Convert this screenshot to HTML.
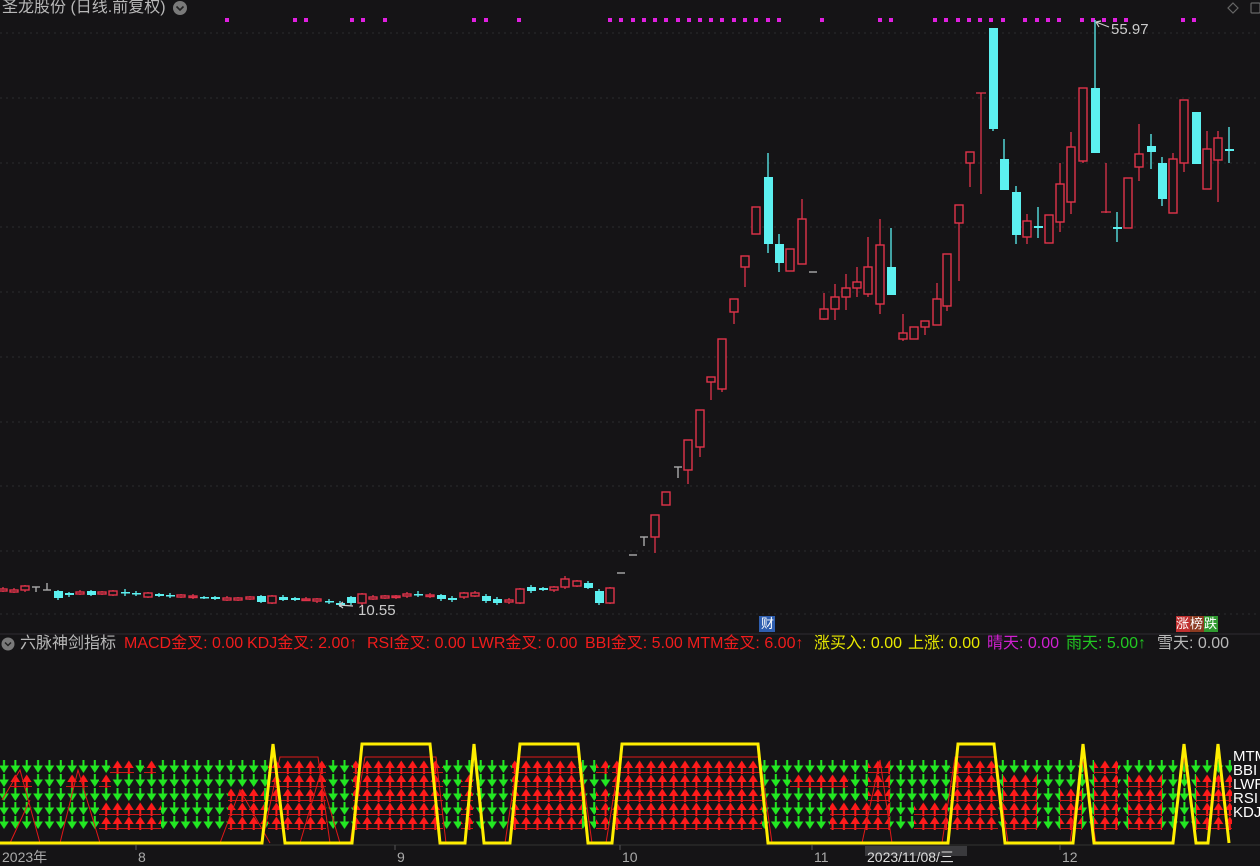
<!DOCTYPE html>
<html><head><meta charset="utf-8">
<style>
html,body{margin:0;padding:0;background:#151416;width:1260px;height:856px;overflow:hidden;font-family:"Liberation Sans","Noto Sans CJK SC",sans-serif}
.t{position:absolute;font-size:16px;white-space:nowrap;line-height:18px}
.rd{color:#f01c1c}
svg{position:absolute;left:0;top:0}
.r{fill:#151416;stroke:#e0334a;stroke-width:1.4}
.c{fill:#5cf0f0}
.rw{stroke:#e0334a;stroke-width:1.3}
.cw{stroke:#5cf0f0;stroke-width:1.3}
.gw{stroke:#aaa;stroke-width:1.4}
</style></head><body>
<svg width="1260" height="856" viewBox="0 0 1260 856">
<defs>
<pattern id="gp" patternUnits="userSpaceOnUse" x="-1.675" y="760" width="11.35" height="14">
<rect x="4.7" y="0" width="2" height="8" fill="#22e822"/>
<polygon points="0.8,5.5 10.55,5.5 5.675,13" fill="#22e822"/>
</pattern>
<pattern id="rp" patternUnits="userSpaceOnUse" x="-1.675" y="760" width="11.35" height="14">
<rect width="11.35" height="14" fill="#151416"/>
<polygon points="0.8,8 10.55,8 5.675,0.5" fill="#ff1a1a"/>
<rect x="4.7" y="6" width="2" height="8" fill="#ff1a1a"/>
<rect x="0" y="12" width="11.35" height="0.9" fill="#e01818"/>
</pattern>
</defs>
<g stroke="#2c2b2e" stroke-width="1" stroke-dasharray="2,4">
<line x1="0" y1="33" x2="1260" y2="33"/><line x1="0" y1="98" x2="1260" y2="98"/><line x1="0" y1="163" x2="1260" y2="163"/><line x1="0" y1="227" x2="1260" y2="227"/><line x1="0" y1="292" x2="1260" y2="292"/><line x1="0" y1="357" x2="1260" y2="357"/><line x1="0" y1="422" x2="1260" y2="422"/><line x1="0" y1="486" x2="1260" y2="486"/><line x1="0" y1="551" x2="1260" y2="551"/><line x1="0" y1="614" x2="1260" y2="614"/>
</g>
<line x1="0" y1="634" x2="1260" y2="634" stroke="#2e2d31"/>
<g fill="#e020e0">
<rect x="225" y="18" width="4" height="4"/><rect x="293" y="18" width="4" height="4"/><rect x="304" y="18" width="4" height="4"/><rect x="350" y="18" width="4" height="4"/><rect x="361" y="18" width="4" height="4"/><rect x="383" y="18" width="4" height="4"/><rect x="472" y="18" width="4" height="4"/><rect x="484" y="18" width="4" height="4"/><rect x="517" y="18" width="4" height="4"/>
<rect x="608" y="18" width="4" height="4"/><rect x="619" y="18" width="4" height="4"/><rect x="631" y="18" width="4" height="4"/><rect x="642" y="18" width="4" height="4"/><rect x="653" y="18" width="4" height="4"/><rect x="664" y="18" width="4" height="4"/><rect x="676" y="18" width="4" height="4"/><rect x="687" y="18" width="4" height="4"/><rect x="698" y="18" width="4" height="4"/><rect x="709" y="18" width="4" height="4"/><rect x="720" y="18" width="4" height="4"/><rect x="732" y="18" width="4" height="4"/><rect x="743" y="18" width="4" height="4"/><rect x="754" y="18" width="4" height="4"/><rect x="766" y="18" width="4" height="4"/><rect x="777" y="18" width="4" height="4"/>
<rect x="820" y="18" width="4" height="4"/><rect x="878" y="18" width="4" height="4"/><rect x="889" y="18" width="4" height="4"/>
<rect x="933" y="18" width="4" height="4"/><rect x="944" y="18" width="4" height="4"/><rect x="956" y="18" width="4" height="4"/><rect x="967" y="18" width="4" height="4"/><rect x="978" y="18" width="4" height="4"/><rect x="989" y="18" width="4" height="4"/><rect x="1001" y="18" width="4" height="4"/>
<rect x="1023" y="18" width="4" height="4"/><rect x="1035" y="18" width="4" height="4"/><rect x="1046" y="18" width="4" height="4"/><rect x="1057" y="18" width="4" height="4"/>
<rect x="1080" y="18" width="4" height="4"/><rect x="1091" y="18" width="4" height="4"/><rect x="1102" y="18" width="4" height="4"/><rect x="1113" y="18" width="4" height="4"/><rect x="1124" y="18" width="4" height="4"/>
<rect x="1181" y="18" width="4" height="4"/><rect x="1192" y="18" width="4" height="4"/>
</g>
<g>
<line class="rw" x1="3" y1="587" x2="3" y2="592"/><rect class="r" x="-1" y="589" width="8" height="2"/>
<line class="rw" x1="14" y1="588" x2="14" y2="593"/><rect class="r" x="10" y="590" width="8" height="2"/>
<line class="rw" x1="25" y1="585" x2="25" y2="592"/><rect class="r" x="21" y="586" width="8" height="4"/>
<line class="gw" x1="36" y1="587" x2="36" y2="592"/><line class="gw" x1="32" y1="587" x2="40" y2="587"/>
<line class="gw" x1="47" y1="583" x2="47" y2="590"/><line class="gw" x1="43" y1="590" x2="51" y2="590"/>
<line class="cw" x1="58" y1="590" x2="58" y2="600"/><rect class="c" x="54" y="591" width="9" height="7"/>
<line class="cw" x1="69" y1="592" x2="69" y2="597"/><rect class="c" x="65" y="593" width="9" height="2"/>
<line class="rw" x1="80" y1="590" x2="80" y2="595"/><rect class="r" x="76" y="592" width="8" height="2"/>
<line class="cw" x1="91" y1="590" x2="91" y2="596"/><rect class="c" x="87" y="591" width="9" height="4"/>
<line class="rw" x1="102" y1="591" x2="102" y2="595"/><rect class="r" x="98" y="592" width="8" height="2"/>
<line class="rw" x1="113" y1="590" x2="113" y2="596"/><rect class="r" x="109" y="591" width="8" height="4"/>
<line class="cw" x1="125" y1="589" x2="125" y2="596"/><rect class="c" x="121" y="592" width="9" height="1.5"/>
<line class="cw" x1="136" y1="591" x2="136" y2="596"/><rect class="c" x="132" y="593" width="9" height="1.5"/>
<line class="rw" x1="148" y1="592" x2="148" y2="598"/><rect class="r" x="144" y="593" width="8" height="4"/>
<line class="cw" x1="159" y1="593" x2="159" y2="597"/><rect class="c" x="155" y="594" width="9" height="2"/>
<line class="cw" x1="170" y1="593" x2="170" y2="598"/><rect class="c" x="166" y="595" width="9" height="1.5"/>
<line class="rw" x1="181" y1="594" x2="181" y2="598"/><rect class="r" x="177" y="595" width="8" height="2"/>
<line class="rw" x1="193" y1="594" x2="193" y2="599"/><rect class="r" x="189" y="596" width="8" height="1.5"/>
<line class="cw" x1="204" y1="596" x2="204" y2="599"/><rect class="c" x="200" y="597" width="9" height="1.5"/>
<line class="cw" x1="215" y1="596" x2="215" y2="600"/><rect class="c" x="211" y="597" width="9" height="2"/>
<line class="rw" x1="227" y1="596" x2="227" y2="601"/><rect class="r" x="223" y="598" width="8" height="2"/>
<line class="rw" x1="238" y1="597" x2="238" y2="601"/><rect class="r" x="234" y="598" width="8" height="2"/>
<line class="rw" x1="250" y1="596" x2="250" y2="600"/><rect class="r" x="246" y="597" width="8" height="2"/>
<line class="cw" x1="261" y1="595" x2="261" y2="603"/><rect class="c" x="257" y="596" width="9" height="6"/>
<line class="rw" x1="272" y1="595" x2="272" y2="604"/><rect class="r" x="268" y="596" width="8" height="7"/>
<line class="cw" x1="283" y1="595" x2="283" y2="601"/><rect class="c" x="279" y="597" width="9" height="3"/>
<line class="cw" x1="295" y1="597" x2="295" y2="601"/><rect class="c" x="291" y="598" width="9" height="2"/>
<line class="rw" x1="306" y1="597" x2="306" y2="601"/><rect class="r" x="302" y="599" width="8" height="1.5"/>
<line class="rw" x1="317" y1="598" x2="317" y2="603"/><rect class="r" x="313" y="599" width="8" height="2"/>
<line class="cw" x1="329" y1="599" x2="329" y2="604"/><rect class="c" x="325" y="601" width="9" height="1.5"/>
<line class="cw" x1="340" y1="601" x2="340" y2="607"/><rect class="c" x="336" y="603" width="9" height="2"/>
<line class="cw" x1="351" y1="596" x2="351" y2="605"/><rect class="c" x="347" y="597" width="9" height="6"/>
<line class="rw" x1="362" y1="593" x2="362" y2="606"/><rect class="r" x="358" y="594" width="8" height="9"/>
<line class="rw" x1="373" y1="595" x2="373" y2="600"/><rect class="r" x="369" y="597" width="8" height="2"/>
<line class="rw" x1="385" y1="595" x2="385" y2="599"/><rect class="r" x="381" y="596" width="8" height="2"/>
<line class="rw" x1="396" y1="595" x2="396" y2="599"/><rect class="r" x="392" y="596" width="8" height="1.5"/>
<line class="rw" x1="407" y1="592" x2="407" y2="598"/><rect class="r" x="403" y="594" width="8" height="2"/>
<line class="cw" x1="418" y1="591" x2="418" y2="597"/><rect class="c" x="414" y="594" width="9" height="1.5"/>
<line class="rw" x1="430" y1="593" x2="430" y2="598"/><rect class="r" x="426" y="595" width="8" height="1.5"/>
<line class="cw" x1="441" y1="594" x2="441" y2="601"/><rect class="c" x="437" y="595" width="9" height="4"/>
<line class="cw" x1="452" y1="596" x2="452" y2="602"/><rect class="c" x="448" y="598" width="9" height="2"/>
<line class="rw" x1="464" y1="592" x2="464" y2="599"/><rect class="r" x="460" y="593" width="8" height="4"/>
<line class="rw" x1="475" y1="591" x2="475" y2="597"/><rect class="r" x="471" y="593" width="8" height="3"/>
<line class="cw" x1="486" y1="594" x2="486" y2="603"/><rect class="c" x="482" y="596" width="9" height="5"/>
<line class="cw" x1="497" y1="597" x2="497" y2="605"/><rect class="c" x="493" y="599" width="9" height="4"/>
<line class="rw" x1="509" y1="598" x2="509" y2="604"/><rect class="r" x="505" y="600" width="8" height="2"/>
<line class="rw" x1="520" y1="588" x2="520" y2="604"/><rect class="r" x="516" y="589" width="8" height="14"/>
<line class="cw" x1="531" y1="585" x2="531" y2="593"/><rect class="c" x="527" y="587" width="9" height="4"/>
<line class="cw" x1="543" y1="587" x2="543" y2="591"/><rect class="c" x="539" y="588" width="9" height="2"/>
<line class="rw" x1="554" y1="586" x2="554" y2="592"/><rect class="r" x="550" y="587" width="8" height="3"/>
<line class="rw" x1="565" y1="576" x2="565" y2="589"/><rect class="r" x="561" y="579" width="8" height="8"/>
<line class="rw" x1="577" y1="580" x2="577" y2="587"/><rect class="r" x="573" y="581" width="8" height="5"/>
<line class="cw" x1="588" y1="581" x2="588" y2="589"/><rect class="c" x="584" y="583" width="9" height="5"/>
<line class="cw" x1="599" y1="589" x2="599" y2="605"/><rect class="c" x="595" y="591" width="9" height="12"/>
<line class="rw" x1="610" y1="587" x2="610" y2="604"/><rect class="r" x="606" y="588" width="8" height="15"/>
<line class="gw" x1="617" y1="573" x2="625" y2="573"/>
<line class="gw" x1="629" y1="555" x2="637" y2="555"/>
<line class="gw" x1="644" y1="537" x2="644" y2="546"/><line class="gw" x1="640" y1="537" x2="648" y2="537"/>
<line class="rw" x1="655" y1="515" x2="655" y2="553"/><rect class="r" x="651" y="515" width="8" height="22"/>
<rect class="r" x="662" y="492" width="8" height="13"/>
<line class="gw" x1="678" y1="467" x2="678" y2="478"/><line class="gw" x1="674" y1="467" x2="682" y2="467"/>
<line class="rw" x1="688" y1="440" x2="688" y2="484"/><rect class="r" x="684" y="440" width="8" height="30"/>
<line class="rw" x1="700" y1="410" x2="700" y2="457"/><rect class="r" x="696" y="410" width="8" height="37"/>
<line class="rw" x1="711" y1="377" x2="711" y2="400"/><rect class="r" x="707" y="377" width="8" height="5"/>
<line class="rw" x1="722" y1="339" x2="722" y2="392"/><rect class="r" x="718" y="339" width="8" height="50"/>
<line class="rw" x1="734" y1="299" x2="734" y2="324"/><rect class="r" x="730" y="299" width="8" height="13"/>
<line class="rw" x1="745" y1="256" x2="745" y2="287"/><rect class="r" x="741" y="256" width="8" height="11"/>
<rect class="r" x="752" y="207" width="8" height="27"/>
<line class="cw" x1="768" y1="153" x2="768" y2="253"/><rect class="c" x="764" y="177" width="9" height="67"/>
<line class="cw" x1="779" y1="234" x2="779" y2="272"/><rect class="c" x="775" y="244" width="9" height="19"/>
<rect class="r" x="786" y="249" width="8" height="22"/>
<line class="rw" x1="802" y1="199" x2="802" y2="264"/><rect class="r" x="798" y="219" width="8" height="45"/>
<line class="gw" x1="809" y1="272" x2="817" y2="272"/>
<line class="rw" x1="824" y1="293" x2="824" y2="320"/><rect class="r" x="820" y="309" width="8" height="10"/>
<line class="rw" x1="835" y1="284" x2="835" y2="320"/><rect class="r" x="831" y="297" width="8" height="12"/>
<line class="rw" x1="846" y1="274" x2="846" y2="310"/><rect class="r" x="842" y="288" width="8" height="9"/>
<line class="rw" x1="857" y1="267" x2="857" y2="297"/><rect class="r" x="853" y="282" width="8" height="6"/>
<line class="rw" x1="868" y1="237" x2="868" y2="297"/><rect class="r" x="864" y="267" width="8" height="27"/>
<line class="rw" x1="880" y1="219" x2="880" y2="314"/><rect class="r" x="876" y="245" width="8" height="59"/>
<line class="cw" x1="891" y1="228" x2="891" y2="295"/><rect class="c" x="887" y="267" width="9" height="28"/>
<line class="rw" x1="903" y1="314" x2="903" y2="341"/><rect class="r" x="899" y="333" width="8" height="6"/>
<rect class="r" x="910" y="327" width="8" height="12"/>
<line class="rw" x1="925" y1="321" x2="925" y2="335"/><rect class="r" x="921" y="321" width="8" height="6"/>
<line class="rw" x1="937" y1="283" x2="937" y2="325"/><rect class="r" x="933" y="299" width="8" height="26"/>
<line class="rw" x1="947" y1="254" x2="947" y2="311"/><rect class="r" x="943" y="254" width="8" height="52"/>
<line class="rw" x1="959" y1="205" x2="959" y2="281"/><rect class="r" x="955" y="205" width="8" height="18"/>
<line class="rw" x1="970" y1="152" x2="970" y2="187"/><rect class="r" x="966" y="152" width="8" height="11"/>
<line class="rw" x1="981" y1="93" x2="981" y2="194"/><line class="rw" x1="976" y1="93" x2="986" y2="93"/>
<line class="cw" x1="993" y1="28" x2="993" y2="131"/><rect class="c" x="989" y="28" width="9" height="101"/>
<line class="cw" x1="1004" y1="139" x2="1004" y2="190"/><rect class="c" x="1000" y="159" width="9" height="31"/>
<line class="cw" x1="1016" y1="186" x2="1016" y2="244"/><rect class="c" x="1012" y="192" width="9" height="43"/>
<line class="rw" x1="1027" y1="214" x2="1027" y2="244"/><rect class="r" x="1023" y="221" width="8" height="16"/>
<line class="cw" x1="1038" y1="207" x2="1038" y2="238"/><rect class="c" x="1034" y="226" width="9" height="2"/>
<rect class="r" x="1045" y="215" width="8" height="28"/>
<line class="rw" x1="1060" y1="163" x2="1060" y2="232"/><rect class="r" x="1056" y="184" width="8" height="38"/>
<line class="rw" x1="1071" y1="132" x2="1071" y2="214"/><rect class="r" x="1067" y="147" width="8" height="55"/>
<line class="rw" x1="1083" y1="88" x2="1083" y2="163"/><rect class="r" x="1079" y="88" width="8" height="73"/>
<line class="cw" x1="1095" y1="20" x2="1095" y2="153"/><rect class="c" x="1091" y="88" width="9" height="65"/>
<line class="rw" x1="1106" y1="163" x2="1106" y2="213"/><line class="rw" x1="1101" y1="212" x2="1111" y2="212"/>
<line class="cw" x1="1117" y1="212" x2="1117" y2="242"/><rect class="c" x="1113" y="227" width="9" height="2"/>
<rect class="r" x="1124" y="178" width="8" height="50"/>
<line class="rw" x1="1139" y1="124" x2="1139" y2="181"/><rect class="r" x="1135" y="154" width="8" height="13"/>
<line class="cw" x1="1151" y1="134" x2="1151" y2="169"/><rect class="c" x="1147" y="146" width="9" height="6"/>
<line class="cw" x1="1162" y1="157" x2="1162" y2="206"/><rect class="c" x="1158" y="163" width="9" height="36"/>
<line class="rw" x1="1173" y1="153" x2="1173" y2="213"/><rect class="r" x="1169" y="159" width="8" height="54"/>
<line class="rw" x1="1184" y1="100" x2="1184" y2="172"/><rect class="r" x="1180" y="100" width="8" height="63"/>
<rect class="c" x="1192" y="112" width="9" height="52"/>
<line class="rw" x1="1207" y1="131" x2="1207" y2="189"/><rect class="r" x="1203" y="149" width="8" height="40"/>
<line class="rw" x1="1218" y1="131" x2="1218" y2="202"/><rect class="r" x="1214" y="138" width="8" height="22"/>
<line class="cw" x1="1229" y1="127" x2="1229" y2="163"/><rect class="c" x="1225" y="149" width="9" height="2"/>
</g>
<g stroke="#ccc" stroke-width="1.2" fill="none">
<path d="M353 606 L339 605 M339 605 L343 602 M339 605 L343 608"/>
<path d="M1109 27 L1096 22 M1096 22 L1099 27 M1096 22 L1101 21"/>
</g>
<text x="358" y="615" fill="#ccc" font-size="15" font-family="Liberation Sans">10.55</text>
<text x="1111" y="34" fill="#ccc" font-size="15" font-family="Liberation Sans">55.97</text>
<path d="M1233 3 L1238 8 L1233 13 L1228 8 Z" fill="none" stroke="#666" stroke-width="1.2"/>
<rect x="1251" y="3" width="9" height="10" rx="1" fill="none" stroke="#666" stroke-width="1.2"/>
<circle cx="180" cy="8" r="7" fill="#7a7a7a"/><path d="M176.5 6.5 L180 10 L183.5 6.5" stroke="#222" stroke-width="1.6" fill="none"/>
<circle cx="8" cy="644" r="6.5" fill="#7a7a7a"/><path d="M5 642.5 L8 645.5 L11 642.5" stroke="#222" stroke-width="1.5" fill="none"/>
<rect x="759" y="616" width="16" height="16" fill="#2f5fb0"/>
<rect x="1176" y="616" width="14" height="16" fill="#c03030"/><rect x="1190" y="616" width="14" height="16" fill="#8a3a20"/><rect x="1204" y="616" width="14" height="16" fill="#2f9a30"/>
<rect x="0" y="760" width="1232" height="70" fill="url(#gp)"/>
<g fill="url(#rp)">
<rect x="268" y="760" width="58" height="70"/>
<rect x="353" y="760" width="90" height="70"/>
<rect x="512" y="760" width="70" height="70"/>
<rect x="612" y="760" width="150" height="70"/>
<rect x="950" y="760" width="48" height="70"/>
<rect x="99" y="802" width="62" height="28"/>
<rect x="10" y="774" width="22" height="14"/>
<rect x="66" y="774" width="22" height="14"/>
<rect x="99" y="774" width="12" height="14"/>
<rect x="144" y="760" width="12" height="14"/>
<rect x="110" y="760" width="24" height="14"/>
<rect x="228" y="788" width="36" height="42"/>
<rect x="461" y="774" width="12" height="56"/>
<rect x="596" y="788" width="12" height="42"/>
<rect x="596" y="760" width="12" height="14"/>
<rect x="868" y="760" width="22" height="70"/>
<rect x="790" y="774" width="58" height="14"/>
<rect x="830" y="802" width="40" height="28"/>
<rect x="1003" y="774" width="34" height="56"/>
<rect x="1060" y="788" width="22" height="42"/>
<rect x="1094" y="760" width="24" height="70"/>
<rect x="1128" y="774" width="34" height="56"/>
<rect x="1196" y="774" width="36" height="56"/>
<rect x="914" y="802" width="34" height="28"/>
</g>
<g stroke="#e01818" stroke-width="1" fill="none">
<path d="M262 843 L280 757 L318 757 L330 843"/>
<path d="M350 843 L365 757 L436 757 L446 843"/>
<path d="M505 843 L518 757 L580 757 L592 843"/>
<path d="M606 843 L620 757 L760 757 L772 843"/>
<path d="M942 843 L955 757 L995 757 L1008 843"/>
<path d="M1070 843 L1082 757 L1096 843"/>
<path d="M1172 843 L1184 757 L1196 843"/>
<path d="M862 843 L880 760 L892 843"/>
<path d="M2 800 L20 770 L40 843 M60 843 L78 770 L100 843 M10 843 L30 800"/>
<path d="M220 843 L240 790 L270 843 M300 843 L320 775 L340 843"/>
</g>
<polyline fill="none" stroke="#ffee00" stroke-width="3" stroke-linejoin="miter" points="0,843 262,843 273,744 285,843 352,843 362,744 430,744 440,843 465,843 474,744 484,843 510,843 520,744 578,744 588,843 612,843 622,744 758,744 768,843 948,843 958,744 994,744 1005,843 1073,843 1083,744 1094,843 1173,843 1184,744 1196,843 1208,843 1218,744 1229,843"/>
<line x1="0" y1="845" x2="1260" y2="845" stroke="#333"/>
<g stroke="#555"><line x1="136" y1="845" x2="136" y2="850"/><line x1="395" y1="845" x2="395" y2="850"/><line x1="620" y1="845" x2="620" y2="850"/><line x1="812" y1="845" x2="812" y2="850"/><line x1="1060" y1="845" x2="1060" y2="850"/></g>
<rect x="865" y="846" width="102" height="12" fill="#3a3a3d"/>
</svg>
<div class="t" style="left:2px;top:-1px;color:#b8b8b8">圣龙股份 (日线.前复权)</div>
<div class="t" style="left:761px;top:615px;color:#fff;font-size:13px">财</div>
<div class="t" style="left:1176px;top:615px;color:#fff;font-size:13px;letter-spacing:1px">涨榜跌</div>
<div class="t" style="left:20px;top:635px;color:#b8b8b8">六脉神剑指标</div>
<div class="t rd" style="left:124px;top:635px">MACD金叉: 0.00</div>
<div class="t rd" style="left:247px;top:635px">KDJ金叉: 2.00↑</div>
<div class="t rd" style="left:367px;top:635px">RSI金叉: 0.00</div>
<div class="t rd" style="left:471px;top:635px">LWR金叉: 0.00</div>
<div class="t rd" style="left:585px;top:635px">BBI金叉: 5.00</div>
<div class="t rd" style="left:687px;top:635px">MTM金叉: 6.00↑</div>
<div class="t" style="left:814px;top:635px;color:#e8e800">涨买入: 0.00</div>
<div class="t" style="left:908px;top:635px;color:#e8e800">上涨: 0.00</div>
<div class="t" style="left:987px;top:635px;color:#d020d0">晴天: 0.00</div>
<div class="t" style="left:1066px;top:635px;color:#22c822">雨天: 5.00↑</div>
<div class="t" style="left:1157px;top:635px;color:#b8b8b8">雪天: 0.00</div>
<div class="t" style="left:1233px;top:750px;color:#fff;font-size:15px;line-height:14px">MTM<br>BBI<br>LWR<br>RSI<br>KDJ</div>
<div class="t" style="left:2px;top:848px;color:#aaa;font-size:14px">2023年</div>
<div class="t" style="left:138px;top:848px;color:#aaa;font-size:14px">8</div>
<div class="t" style="left:397px;top:848px;color:#aaa;font-size:14px">9</div>
<div class="t" style="left:622px;top:848px;color:#aaa;font-size:14px">10</div>
<div class="t" style="left:814px;top:848px;color:#aaa;font-size:14px">11</div>
<div class="t" style="left:867px;top:848px;color:#ddd;font-size:14px">2023/11/08/三</div>
<div class="t" style="left:1062px;top:848px;color:#aaa;font-size:14px">12</div>
</body></html>
